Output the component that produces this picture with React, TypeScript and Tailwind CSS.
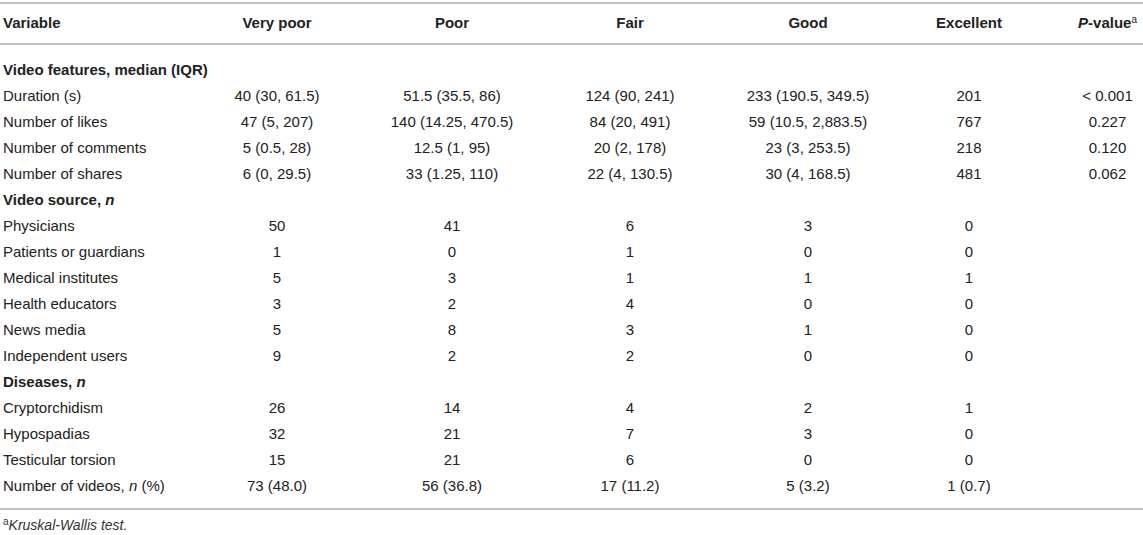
const cols = ["w-[188px]", "w-[178px]", "w-[172px]", "w-[184px]", "w-[172px]", "w-[150px]", "w-[99px]"]

type Row =
  | { kind: "section"; label: React.ReactNode }
  | { kind: "data"; label: React.ReactNode; values: string[] }

const rows: Row[] = [
  { kind: "section", label: "Video features, median (IQR)" },
  { kind: "data", label: "Duration (s)", values: ["40 (30, 61.5)", "51.5 (35.5, 86)", "124 (90, 241)", "233 (190.5, 349.5)", "201", "< 0.001"] },
  { kind: "data", label: "Number of likes", values: ["47 (5, 207)", "140 (14.25, 470.5)", "84 (20, 491)", "59 (10.5, 2,883.5)", "767", "0.227"] },
  { kind: "data", label: "Number of comments", values: ["5 (0.5, 28)", "12.5 (1, 95)", "20 (2, 178)", "23 (3, 253.5)", "218", "0.120"] },
  { kind: "data", label: "Number of shares", values: ["6 (0, 29.5)", "33 (1.25, 110)", "22 (4, 130.5)", "30 (4, 168.5)", "481", "0.062"] },
  { kind: "section", label: <>Video source, <i>n</i></> },
  { kind: "data", label: "Physicians", values: ["50", "41", "6", "3", "0", ""] },
  { kind: "data", label: "Patients or guardians", values: ["1", "0", "1", "0", "0", ""] },
  { kind: "data", label: "Medical institutes", values: ["5", "3", "1", "1", "1", ""] },
  { kind: "data", label: "Health educators", values: ["3", "2", "4", "0", "0", ""] },
  { kind: "data", label: "News media", values: ["5", "8", "3", "1", "0", ""] },
  { kind: "data", label: "Independent users", values: ["9", "2", "2", "0", "0", ""] },
  { kind: "section", label: <>Diseases, <i>n</i></> },
  { kind: "data", label: "Cryptorchidism", values: ["26", "14", "4", "2", "1", ""] },
  { kind: "data", label: "Hypospadias", values: ["32", "21", "7", "3", "0", ""] },
  { kind: "data", label: "Testicular torsion", values: ["15", "21", "6", "0", "0", ""] },
  { kind: "data", label: <>Number of videos, <i>n</i> (%)</>, values: ["73 (48.0)", "56 (36.8)", "17 (11.2)", "5 (3.2)", "1 (0.7)", ""] },
]

export default function App() {
  return (
    <div className="w-[1143px] h-[535px] bg-white text-[#222] font-['Liberation_Sans',Arial,sans-serif] text-[15px] pt-[2px]">
      <table className="table-fixed border-collapse w-[1143px]">
        <colgroup>
          {cols.map((c, i) => (
            <col key={i} className={c} />
          ))}
        </colgroup>
        <thead>
          <tr className="h-[41px] border-y-2 border-[#c2c2c2] font-bold">
            <th className="text-left pl-[3px]">Variable</th>
            <th className="text-center">Very poor</th>
            <th className="text-center">Poor</th>
            <th className="text-center">Fair</th>
            <th className="text-center">Good</th>
            <th className="text-center">Excellent</th>
            <th className="text-center pl-[28px] whitespace-nowrap">
              <i>P</i>-value<sup className="font-normal text-[10px]">a</sup>
            </th>
          </tr>
        </thead>
        <tbody className="border-b-2 border-[#c2c2c2]">
          <tr className="h-[13px]">
            <td colSpan={7}></td>
          </tr>
          {rows.map((r, i) =>
            r.kind === "section" ? (
              <tr key={i} className="h-[26px]">
                <td colSpan={7} className="pl-[3px] font-bold whitespace-nowrap">
                  {r.label}
                </td>
              </tr>
            ) : (
              <tr key={i} className="h-[26px]">
                <td className="pl-[3px] whitespace-nowrap">{r.label}</td>
                {r.values.map((v, j) => (
                  <td key={j} className={j === 5 ? "text-center pl-[28px] whitespace-nowrap" : "text-center whitespace-nowrap"}>
                    {v}
                  </td>
                ))}
              </tr>
            )
          )}
          <tr className="h-[10px]">
            <td colSpan={7}></td>
          </tr>
        </tbody>
      </table>
      <div className="pl-[3px] pt-[5px] text-[14px] leading-[20px] text-[#333]">
        <sup className="text-[10px]">a</sup>
        <i>Kruskal-Wallis test.</i>
      </div>
    </div>
  )
}
